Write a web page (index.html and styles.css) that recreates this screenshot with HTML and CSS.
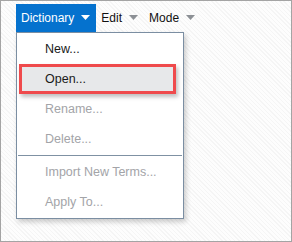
FILE: index.html
```html
<!DOCTYPE html>
<html lang="en">
<head>
  <meta charset="UTF-8">
  <title>Dictionary menu</title>
  <link rel="stylesheet" href="styles.css">
</head>
<body>
  <div class="frame">
    <nav class="menubar">
      <a class="menu-btn active">Dictionary
        <svg class="caret" width="9" height="5" viewBox="0 0 9 5"><polygon points="0,0 9,0 4.5,5"/></svg>
      </a>
      <a class="menu-btn">Edit
        <svg class="caret" width="9" height="5" viewBox="0 0 9 5"><polygon points="0,0 9,0 4.5,5"/></svg>
      </a>
      <a class="menu-btn">Mode
        <svg class="caret" width="9" height="5" viewBox="0 0 9 5"><polygon points="0,0 9,0 4.5,5"/></svg>
      </a>
    </nav>

    <ul class="dropdown">
      <li class="item">New...</li>
      <li class="item marked"><span>Open...</span></li>
      <li class="item disabled">Rename...</li>
      <li class="item disabled">Delete...</li>
      <li class="sep"></li>
      <li class="item disabled">Import New Terms...</li>
      <li class="item disabled">Apply To...</li>
    </ul>
  </div>
</body>
</html>
```

FILE: styles.css
```css
html, body {
  margin: 0;
  padding: 0;
}
body {
  font-family: "Liberation Sans", Arial, sans-serif;
  font-size: 12px;
  color: #1a1a1a;
}
.frame {
  width: 292px;
  height: 242px;
  box-sizing: border-box;
  border: 1px solid #a4a4a4;
  padding: 3px 15px;
  background: repeating-linear-gradient(45deg, #f5f5f5 0 1px, #fdfdfd 1px 3px);
}
.menubar {
  display: flex;
  height: 28px;
}
.menu-btn {
  display: flex;
  align-items: center;
  gap: 7px;
  padding: 0 6px 1px 5px;
  color: #111;
  cursor: default;
}
.menu-btn .caret {
  fill: #8c9095;
}
.menu-btn.active {
  background: #0572ce;
  color: #fff;
}
.menu-btn.active .caret {
  fill: #fff;
}
.dropdown {
  list-style: none;
  margin: 0;
  padding: 1px 0;
  width: 168px;
  box-sizing: border-box;
  background: #fff;
  border: 1px solid #7b8ea2;
  box-shadow: 2px 3px 5px rgba(0, 0, 0, 0.2);
}
.item {
  position: relative;
  height: 30px;
  line-height: 30px;
  padding-left: 28px;
  font-size: 12.5px;
}
.item span {
  position: relative;
}
.item.disabled {
  color: #a3a4a8;
}
.item.marked::before {
  content: "";
  position: absolute;
  left: 2px;
  right: 7px;
  top: 0;
  bottom: 0;
  background: #e7e8ea;
  border: 3px solid #ef4a4c;
  box-shadow: 2px 3px 4px rgba(0, 0, 0, 0.25);
}
.sep {
  height: 1px;
  margin: 1px 1px;
  background: #7f91a3;
}
```
